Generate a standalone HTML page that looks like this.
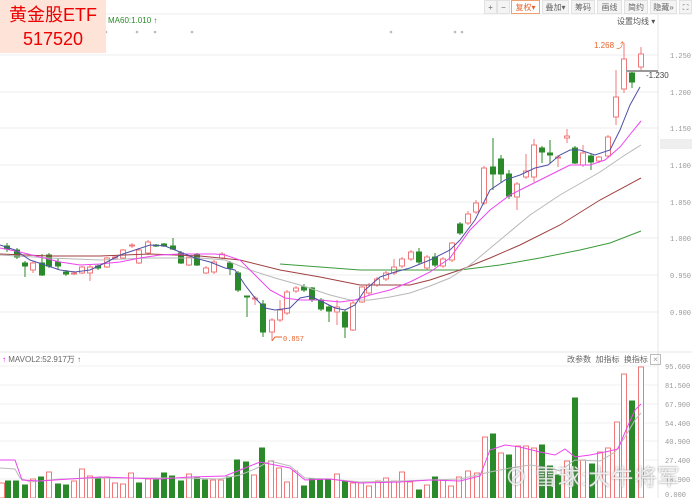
<!DOCTYPE html><html><head><meta charset="utf-8"><style>
body{margin:0;width:692px;height:498px;overflow:hidden;background:#fff;font-family:"Liberation Sans","Noto Sans CJK SC",sans-serif;position:relative}
.t{position:absolute;font-size:9px;color:#555;white-space:nowrap}
.btn{position:absolute;top:0;height:14px;font-size:8px;color:#666;line-height:14px;text-align:center;background:#f4f4f4;border:1px solid #e2e2e2;box-sizing:border-box;white-space:nowrap;overflow:hidden}
#title{position:absolute;left:0;top:0;width:106px;height:53px;background:#fde3d8;color:#e00;font-size:18px;line-height:24px;text-align:center;padding-top:3px;box-sizing:border-box}
#wm{position:absolute;left:505px;top:460px;font-size:22px;color:rgba(255,255,255,.8);text-shadow:0 0 2px #888;letter-spacing:1px}
</style></head><body>
<svg id="s" width="692" height="498" style="position:absolute;left:0;top:0"></svg>
<div id="title">黄金股ETF<br>517520</div>
<div class="btn" style="left:484px;width:13px">+</div>
<div class="btn" style="left:497px;width:13px">−</div>
<div class="btn" style="left:511px;width:29px;color:#e8622a;border-color:#f0a070;background:#fff">复权▾</div>
<div class="btn" style="left:542px;width:27px">叠加▾</div>
<div class="btn" style="left:571px;width:24px">筹码</div>
<div class="btn" style="left:597px;width:25px">画线</div>
<div class="btn" style="left:624px;width:24px">简约</div>
<div class="btn" style="left:650px;width:27px">隐藏»</div>
<div class="btn" style="left:679px;width:13px">⛶</div>
<div class="t" style="left:108px;top:16px;color:#2a8a2a;font-size:8px">MA60:1.010 ↑</div>
<div class="t" style="left:617px;top:16px;font-size:8px">设置均线 ▾</div>
<div class="t" style="left:594px;top:40px;color:#e8622a;font-size:8px">1.268 ⤴</div>
<div class="t" style="left:646px;top:71px;color:#444;font-size:8px">-1.230</div>
<div class="t" style="left:660px;top:139px;width:32px;height:10px;background:#eee"></div>
<div class="t" style="left:2px;top:354px;font-size:8px;color:#666"><span style="color:#e0e">↑</span> MAVOL2:52.917万 ↑</div>
<div class="t" style="left:567px;top:354px;font-size:8px;color:#666">改参数 &nbsp;加指标 &nbsp;换指标</div>
<div class="t" style="left:650px;top:354px;width:9px;height:9px;border:1px solid #bbb;font-size:8px;line-height:9px;text-align:center;color:#999">×</div>
<div id="wm">⊘ 雪球:大牛将军</div>
<script>
var s=document.getElementById('s'),h='';
function L(x1,y1,x2,y2,c,w,d){h+='<line x1="'+x1+'" y1="'+y1+'" x2="'+x2+'" y2="'+y2+'" stroke="'+c+'" stroke-width="'+(w||1)+'"'+(d?' stroke-dasharray="'+d+'"':'')+'/>';}
function T(x,y,t,c){h+='<text x="'+x+'" y="'+y+'" font-size="7" fill="'+(c||'#666')+'" font-family="Liberation Mono,monospace">'+t+'</text>';}
[55,92,128,165,202,238,275,312].forEach(function(y){L(0,y,658,y,'#eee');});
[366,385,404,423,441,460,479].forEach(function(y){L(0,y,658,y,'#f0f0f0');});
L(0,352,692,352,'#e4e4e4');L(658,14,658,498,'#e4e4e4');L(0,14,692,14,'#eee');
var pl=['1.250','1.200','1.150','1.100','1.050','1.000','0.950','0.900'];
[55,92,128,165,202,238,275,312].forEach(function(y,i){T(670,y+3,pl[i],'#999');});
T(670,146,'1.124','#555');
var vl=['95.600','81.500','67.900','54.400','40.900','27.400','13.900','0.000'];
[369,388,407,426,444,463,482,497].forEach(function(y,i){T(665,y,vl[i],'#999');});
[106,137,155,192,391,455,462].forEach(function(x){h+='<circle cx="'+x+'" cy="32" r="1.3" fill="#bbb"/>';});
var C=[[7,246,249,243,252,0],[17,250,257,248,259,0],[25,263,266,261,277,0],[33,263,270,261,273,1],[42,263,275,254,276,0],[49,255,266,253,268,0],[58,262,266,258,270,0],[66,272,274,270,276,0],[74,273,274,271,275,1],[82,267,273,266,274,1],[90,267,273,265,281,1],[98,266,268,264,270,0],[107,258,267,257,268,1],[115,257,258,255,260,1],[123,250,258,249,259,1],[132,245,246,243,248,1],[139,250,263,248,264,1],[148,242,253,240,255,1],[156,245,246,244,247,0],[164,244,246,243,247,0],[173,246,249,238,250,0],[181,253,263,251,264,0],[189,257,265,255,266,1],[197,255,265,253,266,0],[206,268,273,266,274,1],[214,262,272,260,274,1],[222,254,258,252,260,1],[230,263,268,261,275,0],[238,273,290,271,292,0],[247,296,297,296,317,0],[255,298,299,296,305,1],[263,304,332,300,337,0],[272,320,332,318,341,1],[280,310,320,300,322,1],[287,292,313,290,315,1],[296,288,291,286,293,1],[304,287,290,284,292,0],[312,288,300,287,302,0],[321,300,309,298,311,0],[329,307,311,305,322,0],[337,307,312,300,325,1],[345,312,327,310,338,0],[353,303,330,301,331,1],[362,287,302,286,303,1],[369,285,293,283,295,1],[377,279,285,277,287,1],[386,273,279,271,281,1],[394,267,273,259,275,1],[402,259,266,257,268,1],[411,252,259,250,261,1],[419,252,262,248,264,0],[427,257,268,255,270,1],[435,257,265,253,267,0],[443,259,266,257,268,1],[452,243,260,242,262,1],[460,224,233,222,235,0],[468,214,223,211,225,1],[476,203,212,200,214,1],[484,168,203,166,205,1],[493,167,174,138,190,0],[501,159,174,155,183,0],[509,174,196,170,199,0],[517,184,197,182,210,1],[526,171,177,154,179,1],[534,145,177,139,182,1],[542,148,152,146,163,0],[550,153,155,140,163,0],[558,157,158,155,167,1],[567,136,138,129,143,1],[575,148,163,146,164,0],[583,153,165,145,167,1],[591,156,162,154,170,0],[599,157,161,156,163,1],[608,137,156,135,158,1],[616,97,117,70,125,1],[624,59,89,43,93,1],[632,73,82,71,88,0],[641,54,67,47,71,1]];
C.forEach(function(c){var col=c[5]?'#f07878':'#2a8a2a';L(c[0],c[3],c[0],c[1],col);L(c[0],c[2],c[0],c[4],col);
h+='<rect x="'+(c[0]-2.5)+'" y="'+c[1]+'" width="5" height="'+Math.max(1,c[2]-c[1])+'" fill="'+(c[5]?'#fff':'#2a8a2a')+'" stroke="'+col+'" stroke-width="1"/>';});
function P(pts,c,w){h+='<polyline fill="none" stroke="'+c+'" stroke-width="'+(w||1)+'" points="'+pts+'"/>';}
P('280,264 320,267 360,270 400,270 460,270 500,265 540,258 580,250 610,243 641,231','#3a9a3a');
P('0,254 50,256 100,256 150,254 200,256 240,260 280,270 320,277 360,285 390,285 410,285 430,280 460,270 490,258 520,245 560,225 600,200 641,178','#a04040');
P('0,255 50,258 100,260 150,258 200,258 225,260 250,270 275,278 300,285 330,295 350,300 370,300 390,297 410,293 430,286 450,278 470,265 500,240 530,215 560,195 600,172 625,155 641,145','#b8b8b8');
P('0,248 20,252 40,257 60,262 80,265 100,264 120,262 140,258 160,255 180,254 200,254 215,254 225,255 240,260 255,275 270,290 285,298 300,300 320,300 340,302 355,300 370,295 390,290 410,282 430,272 450,258 470,230 490,210 510,195 530,185 550,175 570,165 590,165 605,160 620,147 632,132 641,121','#ee44ee');
P('0,245 15,250 30,260 45,265 60,270 75,272 90,270 105,263 120,255 135,250 150,245 165,246 180,252 195,258 210,262 225,268 235,270 245,285 255,298 265,308 275,310 290,308 300,298 310,296 325,303 335,308 345,310 355,305 365,290 380,277 395,272 410,268 430,260 450,250 460,240 475,220 490,190 505,180 520,175 535,168 548,165 560,155 570,150 580,150 595,155 610,150 620,130 630,105 640,87','#5050a8');
L(626,71,658,71,'#999',2);
h+='<polyline fill="none" stroke="#e8622a" points="272,341 275,337 282,337"/>';T(283,341,'0.857','#e8622a');
var V=[[2,483,1],[8,481,0],[16,481,0],[25,485,0],[33,479,1],[41,477,0],[49,472,1],[58,484,0],[66,485,0],[74,481,1],[82,469,1],[90,476,1],[98,478,0],[107,477,1],[115,483,1],[123,484,1],[131,473,1],[139,483,0],[148,479,1],[156,480,0],[164,473,0],[172,476,0],[181,481,0],[189,474,1],[197,478,0],[205,480,0],[213,480,1],[221,480,1],[229,477,0],[237,460,0],[246,462,0],[254,475,1],[262,448,0],[271,461,1],[279,468,1],[287,482,1],[295,471,1],[304,486,0],[312,479,0],[320,479,0],[328,479,0],[337,474,1],[345,481,0],[353,483,1],[361,483,1],[369,486,1],[378,481,1],[386,478,1],[394,481,1],[402,472,1],[410,482,1],[419,490,0],[427,485,1],[435,477,0],[443,480,1],[451,486,1],[459,477,1],[468,471,1],[477,473,1],[485,437,1],[493,434,0],[501,453,1],[509,455,0],[518,446,1],[526,446,1],[534,448,1],[542,445,0],[550,466,0],[558,475,0],[567,461,1],[575,398,0],[583,460,1],[592,464,0],[600,452,1],[608,448,1],[617,422,1],[624,374,1],[632,401,0],[641,367,1]];
V.forEach(function(v){h+='<rect x="'+(v[0]-2.5)+'" y="'+v[1]+'" width="5" height="'+(498-v[1])+'" fill="'+(v[2]?'#fff':'#2a8a2a')+'" stroke="'+(v[2]?'#f07878':'#2a8a2a')+'"/>';});
P('0,468 15,469 20,478 30,482 60,479 100,478 140,478 180,478 220,479 240,475 255,469 270,461 290,466 305,478 330,479 360,482 400,481 430,480 460,479 490,472 510,468 530,465 550,468 560,471 575,460 600,461 615,452 625,437 635,420 641,413','#bbb');
P('0,460 15,460 22,480 40,481 70,479 100,477 130,478 160,479 190,477 225,476 245,468 260,462 275,465 290,468 305,480 330,479 360,483 400,482 430,480 460,481 480,476 490,450 505,445 520,447 540,452 555,455 565,449 575,457 590,455 605,452 618,449 626,430 635,410 641,404','#ee44ee');
s.innerHTML=h;
</script>
</body></html>
